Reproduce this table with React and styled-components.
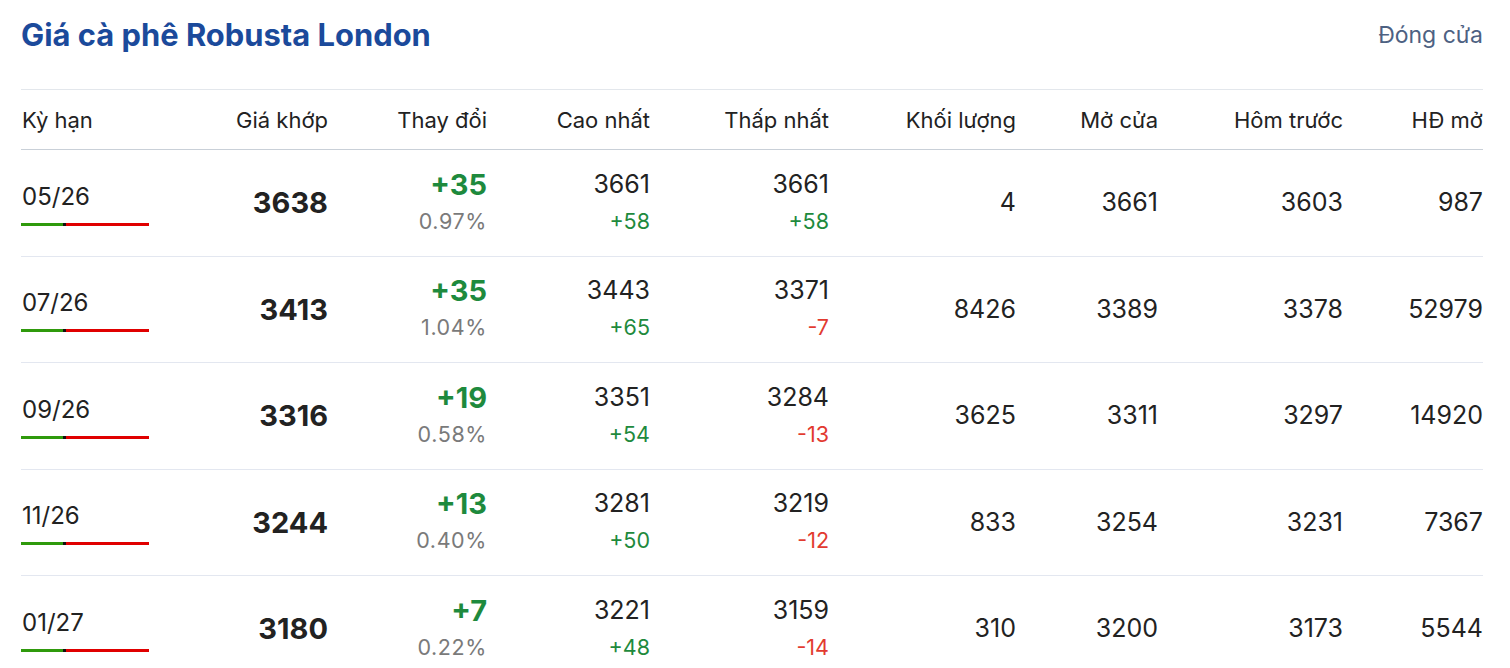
import React from "react";
import styled, { createGlobalStyle } from "styled-components";

const GlobalStyle = createGlobalStyle`
  body {
    margin: 0;
    background: #fff;
    font-family: Inter, "Noto Sans", "Liberation Sans", sans-serif;
    color: #222;
  }
`;

const Wrapper = styled.div`
  padding: 0 27px 0 21px;
`;

const TopBar = styled.div`
  display: flex;
  justify-content: space-between;
  align-items: center;
  height: 89px;
  padding-top: 16px;
  padding-bottom: 35px;
  box-sizing: border-box;
`;

const Title = styled.h2`
  margin: 0;
  font-size: 30.9px;
  line-height: 38px;
  font-weight: 700;
  color: #1b4a9b;
`;

const Status = styled.span`
  font-size: 23px;
  line-height: 38px;
  color: #4d6182;
`;

const COLS = "160px 147px 159px 163px 179px 187px 142px 185px 140px";

const HeadRow = styled.div`
  display: grid;
  grid-template-columns: ${COLS};
  height: 59px;
  align-items: center;
  border-top: 1px solid #e3e7ec;
  border-bottom: 1px solid #c9d0d8;
`;

const HeadCell = styled.div`
  font-size: 22px;
  text-align: ${({ $left }) => ($left ? "left" : "right")};
  padding-left: ${({ $left }) => ($left ? "1px" : "0")};
`;

const Row = styled.div`
  display: grid;
  grid-template-columns: ${COLS};
  height: 105.5px;
  align-items: center;
  border-bottom: 1px solid #e3e7f0;
`;

const Cell = styled.div`
  text-align: right;
  display: flex;
  flex-direction: column;
  align-items: flex-end;
`;

const Main = styled.span`
  font-size: ${({ $big }) => ($big ? "29px" : "25px")};
  font-weight: ${({ $bold }) => ($bold ? 700 : 400)};
  line-height: 37px;
  color: ${({ $tone }) =>
    $tone === "up" ? "#1e8a3d" : $tone === "down" ? "#e23a2f" : "#222"};
`;

const Sub = styled.span`
  font-size: 21.5px;
  line-height: 37px;
  letter-spacing: ${({ $spaced }) => ($spaced ? "0.6px" : "0")};
  color: ${({ $tone }) =>
    $tone === "up" ? "#1e8a3d" : $tone === "down" ? "#e23a2f" : "#7a7a7a"};
`;

const TermCell = styled.div`
  display: flex;
  flex-direction: column;
  padding-top: 2px;
`;

const Term = styled.span`
  font-size: 24px;
  line-height: 30px;
  padding-left: 1px;
`;

const Bar = styled.div`
  margin-top: 11px;
  width: 128px;
  height: 3px;
  display: flex;
`;

const Seg = styled.div`
  height: 100%;
  flex: ${({ $grow }) => $grow};
  background: ${({ $color }) => $color};
`;

const headers = [
  "Kỳ hạn",
  "Giá khớp",
  "Thay đổi",
  "Cao nhất",
  "Thấp nhất",
  "Khối lượng",
  "Mở cửa",
  "Hôm trước",
  "HĐ mở",
];

const rows = [
  { term: "05/26", price: 3638, chg: "+35", pct: "0.97%", hi: 3661, hiC: "+58", lo: 3661, loC: "+58", vol: 4, open: 3661, prev: 3603, oi: 987 },
  { term: "07/26", price: 3413, chg: "+35", pct: "1.04%", hi: 3443, hiC: "+65", lo: 3371, loC: "-7", vol: 8426, open: 3389, prev: 3378, oi: 52979 },
  { term: "09/26", price: 3316, chg: "+19", pct: "0.58%", hi: 3351, hiC: "+54", lo: 3284, loC: "-13", vol: 3625, open: 3311, prev: 3297, oi: 14920 },
  { term: "11/26", price: 3244, chg: "+13", pct: "0.40%", hi: 3281, hiC: "+50", lo: 3219, loC: "-12", vol: 833, open: 3254, prev: 3231, oi: 7367 },
  { term: "01/27", price: 3180, chg: "+7", pct: "0.22%", hi: 3221, hiC: "+48", lo: 3159, loC: "-14", vol: 310, open: 3200, prev: 3173, oi: 5544 },
];

const tone = (v) => (v.startsWith("-") ? "down" : "up");

const App = () => {
  return (
    <Wrapper>
      <GlobalStyle />
      <TopBar>
        <Title>Giá cà phê Robusta London</Title>
        <Status>Đóng cửa</Status>
      </TopBar>
      <HeadRow>
        {headers.map((h, i) => (
          <HeadCell key={h} $left={i === 0}>
            {h}
          </HeadCell>
        ))}
      </HeadRow>
      {rows.map((r) => (
        <Row key={r.term}>
          <TermCell>
            <Term>{r.term}</Term>
            <Bar>
              <Seg $grow={42} $color="#2f9a0c" />
              <Seg $grow={3} $color="#111" />
              <Seg $grow={83} $color="#e00000" />
            </Bar>
          </TermCell>
          <Cell>
            <Main $big $bold>{r.price}</Main>
          </Cell>
          <Cell>
            <Main $big $bold $tone={tone(r.chg)}>{r.chg}</Main>
            <Sub $spaced>{r.pct}</Sub>
          </Cell>
          <Cell>
            <Main>{r.hi}</Main>
            <Sub $tone={tone(r.hiC)}>{r.hiC}</Sub>
          </Cell>
          <Cell>
            <Main>{r.lo}</Main>
            <Sub $tone={tone(r.loC)}>{r.loC}</Sub>
          </Cell>
          <Cell>
            <Main>{r.vol}</Main>
          </Cell>
          <Cell>
            <Main>{r.open}</Main>
          </Cell>
          <Cell>
            <Main>{r.prev}</Main>
          </Cell>
          <Cell>
            <Main>{r.oi}</Main>
          </Cell>
        </Row>
      ))}
    </Wrapper>
  );
};

export default App;
